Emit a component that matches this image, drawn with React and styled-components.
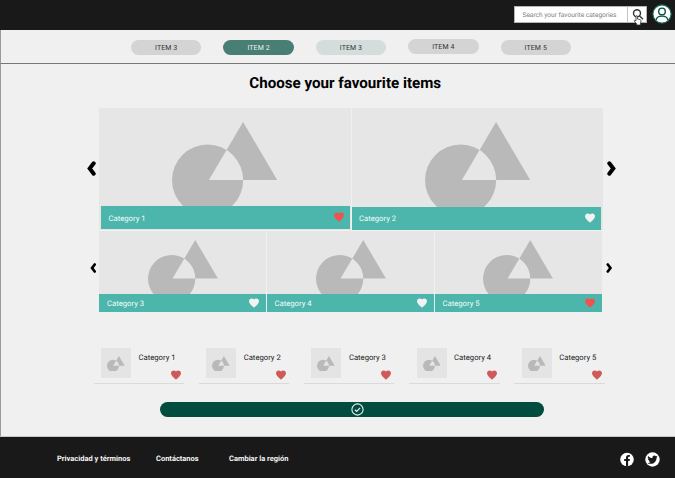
import React from "react";
import styled, { createGlobalStyle } from "styled-components";

const GlobalStyle = createGlobalStyle`
  * { box-sizing: border-box; }
  body {
    margin: 0;
    background: #f0f0f0;
    font-family: Roboto, "Liberation Sans", sans-serif;
    text-rendering: geometricPrecision;
  }
  svg { display: block; flex: none; }
`;

const Page = styled.div`
  width: 675px;
  height: 478px;
  overflow: hidden;
  display: flex;
  flex-direction: column;
  background: #f0f0f0;
`;

const Header = styled.header`
  height: 30px;
  flex: none;
  background: #191919;
  display: flex;
  justify-content: flex-end;
  align-items: flex-start;
  padding: 6px 3px 0 0;
`;

const SearchBox = styled.div`
  width: 133px;
  height: 17px;
  margin-right: 5px;
  display: flex;
  background: #fff;
  border: 1px solid #b5b5b5;
`;

const SearchText = styled.div`
  width: 113px;
  padding-left: 7.5px;
  border-right: 1px solid #c4c4c4;
  font-size: 6.6px;
  letter-spacing: -0.02px;
  line-height: 16px;
  color: #808080;
  white-space: nowrap;
`;

const SearchButton = styled.div`
  position: relative;
  flex: 1;
  padding: 1px 0 0 2.5px;
`;

const Pointer = styled.svg`
  position: absolute;
  left: 5px;
  top: 8px;
`;

const Avatar = styled.svg`
  margin-top: -2px;
`;

const Nav = styled.nav`
  height: 34px;
  flex: none;
  display: flex;
  gap: 22px;
  padding: 10px 0 0 131px;
  border-left: 1px solid #9a9a9a;
  border-bottom: 1px solid #777;
`;

const Pill = styled.div`
  width: 70.4px;
  height: 15px;
  margin-top: ${(p) => (p.$raised ? "-1px" : "0")};
  margin-left: ${(p) => (p.$first ? "-1px" : "0")};
  border-radius: 8px;
  background: ${(p) => p.$bg};
  color: ${(p) => p.$color};
  font-size: 7px;
  line-height: 16px;
  letter-spacing: 0.1px;
  text-align: center;
`;

const Main = styled.main`
  flex: 1;
  border-left: 1px solid #9a9a9a;
`;

const Title = styled.h1`
  margin: 0;
  height: 44px;
  padding: 8px 0 0 248.3px;
  font-size: 15.15px;
  line-height: 22px;
  font-weight: 700;
  color: #000;
  white-space: nowrap;
`;

const Carousel = styled.section`
  height: ${(p) => p.$height}px;
  display: flex;
  align-items: flex-start;
`;

const ArrowSlot = styled.div`
  width: ${(p) => p.$width}px;
  padding: ${(p) => p.$top}px 0 0 ${(p) => p.$left}px;
  flex: none;
`;

const Cards = styled.div`
  display: flex;
  gap: ${(p) => p.$gap}px;
  flex: none;
`;

const Card = styled.article`
  width: ${(p) => p.$width}px;
  height: ${(p) => p.$height}px;
  display: flex;
  flex-direction: column;
  background: #e6e6e6;
  overflow: hidden;
`;

const Artwork = styled.div`
  flex: 1;
  min-height: 0;
  overflow: hidden;
  padding: ${(p) => p.$top}px 0 0 ${(p) => p.$left}px;
`;

const Caption = styled.div`
  height: ${(p) => p.$height}px;
  margin: 0 ${(p) => p.$right || 0}px ${(p) => p.$bottom || 0}px ${(p) => p.$left || 0}px;
  padding: 0 ${(p) => p.$end}px 0 ${(p) => p.$start}px;
  flex: none;
  display: flex;
  align-items: center;
  justify-content: space-between;
  background: #4db6ac;
  color: #f3fbfa;
  font-size: 7.7px;
`;

const CaptionText = styled.span`
  padding-top: ${(p) => (p.$low ? "1.5px" : "0")};
`;

const Favourites = styled.section`
  display: flex;
  gap: 14.7px;
  padding: 34px 0 0 92.5px;
`;

const Favourite = styled.article`
  width: 90.5px;
  height: 38px;
  flex: none;
  display: flex;
  padding: 2px 0 0 7.5px;
  border-bottom: 1px solid ${(p) => (p.$active ? "#d5e0d4" : "#dadada")};
`;

const Thumb = styled.div`
  width: 30px;
  height: 30px;
  flex: none;
  background: #e4e4e4;
  padding: 7.5px 0 0 6px;
`;

const FavouriteBody = styled.div`
  flex: 1;
  display: flex;
  flex-direction: column;
  justify-content: space-between;
  padding-left: 7.5px;
  font-size: 7.7px;
  line-height: 19px;
  color: #1c1c1c;
  white-space: nowrap;
`;

const HeartSlot = styled.div`
  padding: 0 0 2px 31.5px;
`;

const Confirm = styled.div`
  width: 384px;
  height: 15px;
  margin: 18px 0 0 159px;
  padding: 0 0 0 191px;
  border-radius: 8px;
  background: #004d40;
  display: flex;
  align-items: center;
`;

const Footer = styled.footer`
  height: 42px;
  flex: none;
  display: flex;
  align-items: flex-start;
  background: #191919;
  border-top: 1px solid #c6c6c6;
  padding: 17px 0 0 57px;
`;

const FooterLink = styled.div`
  width: ${(p) => p.$width}px;
  flex: none;
  font-size: 7.5px;
  line-height: 9px;
  font-weight: 700;
  color: #f4f4f4;
  white-space: nowrap;
`;

const Social = styled.div`
  display: flex;
  gap: 11px;
  margin: -2px 0 0 auto;
  padding-right: 15px;
`;

const Heart = ({ color, size = 12 }) => (
  <svg width={size} height={size} viewBox="0 0 24 24" fill={color}>
    <path d="M12 21.35l-1.45-1.32C5.4 15.36 2 12.28 2 8.5 2 5.42 4.42 3 7.5 3c1.74 0 3.41.81 4.5 2.09C13.09 3.81 14.76 3 16.5 3 19.58 3 22 5.42 22 8.5c0 3.78-3.4 6.86-8.55 11.54L12 21.35z" />
  </svg>
);

const Shapes = ({ scale }) => (
  <svg width={105.4 * scale} height={94 * scale} viewBox="0 0 105.4 94" fill="#b9b9b9">
    <path
      fillRule="evenodd"
      d="M0 58.2a35.6 35.6 0 1 0 71.2 0a35.6 35.6 0 1 0-71.2 0zM71.1 0L105.2 58H36.9z"
    />
  </svg>
);

const Chevron = ({ width, height, flip }) => (
  <svg width={width} height={height} viewBox="0 0 9 15" fill="none">
    <path
      d={flip ? "M2.3 2.3L6.3 7.5L2.3 12.7" : "M6.7 2.3L2.7 7.5L6.7 12.7"}
      stroke="#000"
      strokeWidth="4"
      strokeLinecap="round"
    />
  </svg>
);

const WHITE = "#f3f3f3";
const RED = "#ef5350";

const pills = [
  { label: "ITEM 3", bg: "#d4d4d4", color: "#333" },
  { label: "ITEM 2", bg: "#487e73", color: "#e8f2f0" },
  { label: "ITEM 3", bg: "#d3dddb", color: "#333" },
  { label: "ITEM 4", bg: "#d4d4d4", color: "#333", raised: true },
  { label: "ITEM 5", bg: "#d4d4d4", color: "#333" },
];

const large = [
  { label: "Category 1", heart: RED, width: 251.5, low: true, bar: { $height: 23, $bottom: 0.6, $left: 2, $right: 0.5, $start: 7.5, $end: 5 } },
  { label: "Category 2", heart: WHITE, width: 251, bar: { $height: 22.5, $right: 2, $start: 7, $end: 5.5 } },
];

const small = [
  { label: "Category 3", heart: WHITE, width: 167, art: 48.7, bar: { $right: 0.5, $start: 8, $end: 6 } },
  { label: "Category 4", heart: WHITE, width: 167, art: 48.7, bar: { $start: 7.5, $end: 6 } },
  { label: "Category 5", heart: RED, width: 166.5, art: 48, bar: { $start: 7.5, $end: 6 } },
];

export default function App() {
  return (
    <Page>
      <GlobalStyle />
      <Header>
        <SearchBox>
          <SearchText>Search your favourite categories</SearchText>
          <SearchButton>
            <svg width="14" height="14" viewBox="0 0 14 14" fill="none" stroke="#333" strokeWidth="1.4">
              <circle cx="6" cy="5.3" r="3.5" />
              <path d="M8.4 7.8L12 11.2" />
            </svg>
            <Pointer width="9" height="11" viewBox="0 0 9 11">
              <path
                d="M3 5.8V1.5q0-.9.7-.9t.7.9V4l2.9.7q.8.3.7 1.1L7.5 8.3V10H3.6V8.8L1.3 6.2q-.4-.8.3-.9z"
                fill="#fff"
                stroke="#333"
                strokeWidth=".8"
              />
            </Pointer>
          </SearchButton>
        </SearchBox>
        <Avatar width="20" height="20" viewBox="0 0 20 20" fill="none">
          <circle cx="10" cy="10" r="9.1" fill="#fff" stroke="#176b5a" strokeWidth="1.1" />
          <circle cx="10" cy="7.4" r="3.3" stroke="#075244" strokeWidth="1.4" />
          <path d="M4.1 16.2C4.7 10.8 15.3 10.8 15.9 16.2" stroke="#075244" strokeWidth="1.4" />
        </Avatar>
      </Header>
      <Nav>
        {pills.map((p, i) => (
          <Pill key={i} $bg={p.bg} $color={p.color} $raised={p.raised} $first={i === 0}>
            {p.label}
          </Pill>
        ))}
      </Nav>
      <Main>
        <Title>Choose your favourite items</Title>
        <Carousel $height={123}>
          <ArrowSlot $width={98} $left={85.5} $top={53}>
            <Chevron width={9} height={15} />
          </ArrowSlot>
          <Cards $gap={1.5}>
            {large.map((c) => (
              <Card key={c.label} $width={c.width} $height={121.5}>
                <Artwork $left={73.4} $top={14}>
                  <Shapes scale={1} />
                </Artwork>
                <Caption {...c.bar}>
                  <CaptionText $low={c.low}>{c.label}</CaptionText>
                  <Heart color={c.heart} />
                </Caption>
              </Card>
            ))}
          </Cards>
          <ArrowSlot $width={20} $left={3.5} $top={53}>
            <Chevron width={9} height={15} flip />
          </ArrowSlot>
        </Carousel>
        <Carousel $height={81}>
          <ArrowSlot $width={98} $left={88.7} $top={32}>
            <Chevron width={6.5} height={10} />
          </ArrowSlot>
          <Cards $gap={1}>
            {small.map((c) => (
              <Card key={c.label} $width={c.width} $height={81}>
                <Artwork $left={c.art} $top={9}>
                  <Shapes scale={0.665} />
                </Artwork>
                <Caption $height={18} {...c.bar}>
                  <CaptionText>{c.label}</CaptionText>
                  <Heart color={c.heart} />
                </Caption>
              </Card>
            ))}
          </Cards>
          <ArrowSlot $width={20} $left={4.7} $top={32}>
            <Chevron width={6.5} height={10} flip />
          </ArrowSlot>
        </Carousel>
        <Favourites>
          {[1, 2, 3, 4, 5].map((n) => (
            <Favourite key={n} $active={n === 1}>
              <Thumb>
                <Shapes scale={0.168} />
              </Thumb>
              <FavouriteBody>
                Category {n}
                <HeartSlot>
                  <Heart color="#cf5a5a" />
                </HeartSlot>
              </FavouriteBody>
            </Favourite>
          ))}
        </Favourites>
        <Confirm>
          <svg width="13" height="13" viewBox="0 0 13 13" fill="none" stroke="#e8f0ee">
            <circle cx="6.5" cy="6.5" r="5.6" strokeWidth="1.1" />
            <path d="M3.9 6.7L5.7 8.4L9.1 4.8" strokeWidth="1.2" />
          </svg>
        </Confirm>
      </Main>
      <Footer>
        <FooterLink $width={99}>Privacidad y términos</FooterLink>
        <FooterLink $width={73}>Contáctanos</FooterLink>
        <FooterLink $width={80}>Cambiar la región</FooterLink>
        <Social>
          <svg width="14" height="15" viewBox="0 0 14 15">
            <circle cx="7" cy="7.5" r="6.8" fill="#fff" />
            <path d="M6 14.5V9H4.2V7H6V5.7C6 3.9 7 3 8.5 3l1.4.1v1.7h-.8c-.8 0-1 .4-1 1V7h1.8l-.3 2H8.1v5.5z" fill="#191919" />
          </svg>
          <svg width="15" height="15" viewBox="0 0 15 15">
            <circle cx="7.5" cy="7.5" r="7.2" fill="#fff" />
            <g transform="translate(2.4 2.6) scale(.425)">
              <path
                fill="#191919"
                d="M23.95 4.57a10 10 0 0 1-2.82.77 4.96 4.96 0 0 0 2.16-2.72c-.95.55-2 .95-3.13 1.18a4.92 4.92 0 0 0-8.38 4.48C7.69 8.09 4.07 6.13 1.64 3.16a4.92 4.92 0 0 0 1.52 6.57 4.9 4.9 0 0 1-2.23-.61v.06a4.92 4.92 0 0 0 3.95 4.83 5 5 0 0 1-2.21.08 4.94 4.94 0 0 0 4.6 3.42A9.87 9.87 0 0 1 0 19.54a13.99 13.99 0 0 0 7.55 2.21c9.05 0 14-7.5 14-13.98 0-.21 0-.42-.02-.63a9.94 9.94 0 0 0 2.46-2.55z"
              />
            </g>
          </svg>
        </Social>
      </Footer>
    </Page>
  );
}
